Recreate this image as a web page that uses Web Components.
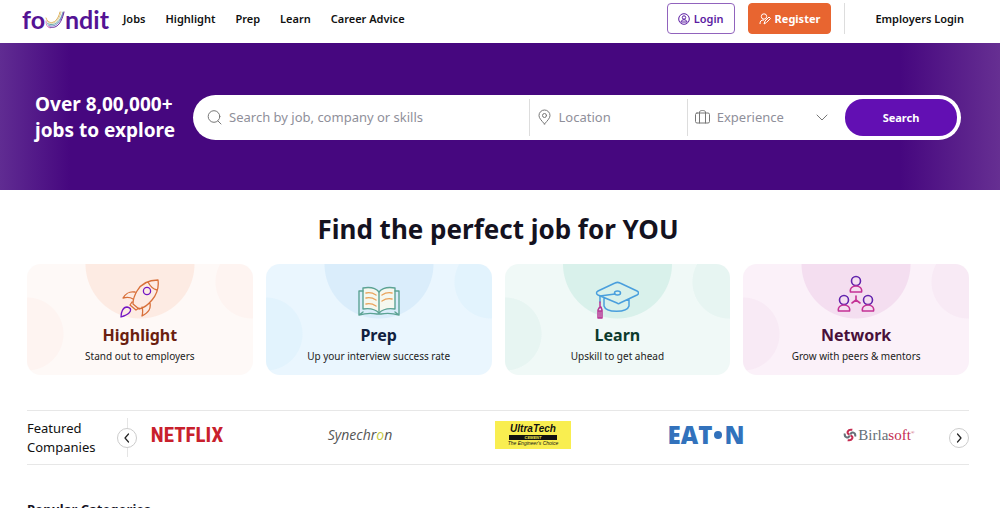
<!DOCTYPE html>
<html lang="en">
<head>
<meta charset="utf-8">
<meta name="viewport" content="width=device-width, initial-scale=1">
<title>foundit</title>
<style>
html { scrollbar-width: none; }
body { margin: 0; background: #fff; color: #111; font-family: "Noto Sans", "Open Sans", sans-serif; font-size: 12px; }
main { padding: 0 31px 0 27px; }
h1 { margin: 20px 0 16px; font-size: 26px; line-height: 38px; font-weight: 700; text-align: center; color: #14121f; }
.cards { display: grid; grid-template-columns: repeat(4, 1fr); gap: 13px; }
</style>
</head>
<body>
<site-header></site-header>
<job-search></job-search>
<main>
  <h1>Find the perfect job for YOU</h1>
  <section class="cards">
    <feature-card style="--bg:#fef9f7;--arc:#fdebe3;--blob:#fef4f1;--ink:#6b1f10">
      <svg slot="icon" width="40" height="45" viewBox="0 -5 40 45" fill="none" stroke="#d8703a" stroke-width="1.3" stroke-linejoin="round" stroke-linecap="round"><path d="M38 1C29 1 21 5 17 12c-3 5-4 9-4 13l6 5c5-1 9-4 13-9C37 15 39 8 38 1ZM28 3c2 4 5 7 9 8M15 13C9 12 6 14 3 19c4-1 7-1 10 1M30 24c1 6-1 9-8 13 1-4 1-6 0-9M12 23l-2 3 6 5 3-2"/><circle cx="27" cy="12" r="3.6" stroke="#7417c4"/><path stroke="#7417c4" d="M1 38c0-5 2-10 6-10 5 1 4 4 2 6-2 2-5 3-8 4Z"/></svg>
      <span slot="title">Highlight</span>Stand out to employers
    </feature-card>
    <feature-card style="--bg:#eaf6fe;--arc:#daedfb;--blob:#e2f3fd;--ink:#10203f">
      <svg slot="icon" width="42" height="46" viewBox="0 -5 42 46" fill="none" stroke="#5ca394" stroke-width="1.4" stroke-linejoin="round" stroke-linecap="round"><path fill="#f5f8ef" d="M21 13C17 8 11 8 5 9v21c6-1 12 0 16 4 4-4 10-5 16-4V9c-6-1-12-1-16 4Z"/><path d="M21 13v21M5 12H1v24c7-2 13-2 18-1h4c5-1 11-1 18 1V12h-4M1 36l4-3M41 36l-4-3"/><path stroke="#e9a45d" d="M8 14c4-1 7 0 10 2M8 19c4-1 7 0 10 2M8 25c4-1 7 0 10 2M34 14c-4-1-7 0-10 2M34 20c-4-1-7 0-10 2"/></svg>
      <span slot="title">Prep</span>Up your interview success rate
    </feature-card>
    <feature-card style="--bg:#f0f9f7;--arc:#d9f1eb;--blob:#e7f5f2;--ink:#0c3a2c">
      <svg slot="icon" width="44" height="46" viewBox="0 -6 44 46" fill="none" stroke="#4a9fdd" stroke-width="1.5" stroke-linejoin="round" stroke-linecap="round"><path d="M20 3 3 11c-2 1-2 3 0 4l19 8c1 1 2 1 3 0l17-8c2-1 2-3 0-4L25 3c-2-1-3-1-5 0ZM9 18v8c2 7 23 7 25 0v-7M5 16l15-2"/><ellipse cx="22.500" cy="13" rx="3" ry="2"/><path d="M5 16v6"/><path stroke="#b73594" d="M5 22v5M4 28l2-1 1 3v8H3v-8l1-2ZM3 31h4M5 32v6"/></svg>
      <span slot="title">Learn</span>Upskill to get ahead
    </feature-card>
    <feature-card style="--bg:#fbf1f9;--arc:#f4def0;--blob:#f8eaf5;--ink:#48103a">
      <svg slot="icon" width="38" height="40" viewBox="0 2 38 40" fill="none" stroke-width="1.6" stroke-linejoin="round" stroke-linecap="round"><g stroke="#6224ad"><circle cx="19" cy="9" r="4.500"/><circle cx="7" cy="28" r="4.500"/><circle cx="31" cy="28" r="4.500"/></g><g stroke="#c43295"><path d="M13.500 20c-2-8 13-8 11 0ZM1.500 39c-2-8 13-8 11 0ZM25.500 39c-2-8 13-8 11 0Z"/><path d="M19 24v4l-4 3M19 28l4 3"/></g></svg>
      <span slot="title">Network</span>Grow with peers &amp; mentors
    </feature-card>
  </section>
  <company-strip></company-strip>
  <popular-categories>Popular Categories</popular-categories>
</main>

<script>
class BaseElement extends HTMLElement {
  constructor() {
    super();
    this.attachShadow({ mode: 'open' }).innerHTML = this.constructor.markup;
  }
}

customElements.define('site-header', class extends BaseElement {
  static markup = `
  <style>
    :host { display: block; }
    header { display: flex; align-items: center; padding: 3px 36px 9px 22px; font-size: 11px; font-weight: 600; line-height: 17px; color: #111; }
    a { color: inherit; text-decoration: none; }
    .logo { display: flex; align-items: center; margin-right: 14px; font-family: Lato, sans-serif; font-size: 25px; line-height: 30px; font-weight: 700; color: #541394; }
    .logo svg { width: 20px; height: 22px; }
    nav { display: flex; gap: 20px; flex: 1; }
    button { display: flex; align-items: center; justify-content: center; gap: 4px; box-sizing: border-box; height: 31px; padding: 0 10px; border-radius: 4px; font: inherit; cursor: pointer; }
    button svg { width: 12px; height: 12px; }
    .login { color: #5b1ba2; background: #fff; border: 1px solid #9163bd; margin-right: 13px; }
    .register { color: #fff; background: #e86530; border: 1px solid #e86530; font-weight: 700; }
    .employers { margin-left: 13px; padding: 7px 0 7px 30px; border-left: 1px solid #ddd; }
  </style>
  <header>
    <a class="logo" href="#" aria-label="foundit home"><span>fo</span><svg viewBox="0 0 20 22" fill="none" stroke-linecap="round" stroke-width="1"><path stroke="#e0b45c" d="M1 10c2 7 11 7 14-6"/><path stroke="#d9c79b" d="M2 13c4 5 12 2 14-9"/><path stroke="#66aaa2" d="M2 15c5 4 13 1 16-11"/><path stroke="#748dce" d="M3 17c5 3 12 0 15-12"/><path stroke="#6a269c" d="M4 19c7 2 12-2 15-15"/><path stroke="#db82ba" d="M1 13c0 4 1 6 4 7"/></svg><span>ndit</span></a>
    <nav><a href="#">Jobs</a><a href="#">Highlight</a><a href="#">Prep</a><a href="#">Learn</a><a href="#">Career Advice</a></nav>
    <button class="login"><svg viewBox="0 0 12 12" fill="none" stroke="currentColor"><circle cx="6" cy="6" r="5.300"/><circle cx="6" cy="4.500" r="1.700"/><path d="M3 9c0-3 6-3 6 0Z"/></svg>Login</button>
    <button class="register"><svg viewBox="0 0 12 12" fill="none" stroke="currentColor" stroke-linejoin="round"><circle cx="5" cy="3.500" r="2.700"/><path d="M1 11c0-3 1-4 4-4M5 11l1-3 4-4 1.500 1.500-4 4L5 11Z"/></svg>Register</button>
    <a class="employers" href="#">Employers Login</a>
  </header>`;
});

customElements.define('job-search', class extends BaseElement {
  static markup = `
  <style>
    :host { display: flex; align-items: center; gap: 18px; padding: 48px 39px 47px 35px; color: #fff;
      background: linear-gradient(90deg, #602c92, #46077f 7%, #46077f 90%, #662f92); }
    h2 { margin: 0; font-size: 19px; line-height: 26px; font-weight: 700; white-space: nowrap; }
    form { flex: 1; min-width: 0; display: grid; grid-template-columns: 335fr 158fr 158fr 112px; box-sizing: border-box; height: 45px; padding: 4px 4px 4px 0; border-radius: 23px; background: #fff; }
    label { display: flex; align-items: center; gap: 7px; min-width: 0; padding: 0 16px 0 8px; color: #8f8f9a; }
    label:first-child { padding-left: 14px; }
    label + label { border-left: 1px solid #ddd; padding-left: 7px; }
    svg { flex: none; width: 15px; height: 16px; fill: none; stroke: #777; stroke-linecap: round; stroke-linejoin: round; }
    input, select { flex: 1; min-width: 0; width: 0; border: 0; padding: 0; outline: 0; background: none; font: inherit; font-size: 13px; line-height: 18px; color: #8f8f9a; appearance: none; }
    input::placeholder { color: #8f8f9a; opacity: 1; }
    button { border: 0; border-radius: 18px; background: #620fb3; color: #fff; font: inherit; font-size: 11px; font-weight: 700; cursor: pointer; }
  </style>
  <h2>Over 8,00,000+<br>jobs to explore</h2>
  <form>
    <label><svg viewBox="0 0 15 16"><circle cx="7" cy="7.500" r="5.800"/><path d="m11 12 3 3"/></svg><input aria-label="Search jobs" placeholder="Search by job, company or skills"></label>
    <label><svg viewBox="0 0 15 16"><path d="M7.500 15C4 11 2 9 2 6.500a5.500 5.500 0 0 1 11 0C13 9 11 11 7.500 15Z"/><circle cx="7.500" cy="6.500" r="2"/></svg><input aria-label="Location" placeholder="Location"></label>
    <label><svg viewBox="0 0 15 16"><rect x=".5" y="4" width="14" height="10" rx="1.500"/><path d="M4.500 14V3c0-2 6-2 6 0v11"/></svg><select aria-label="Experience"><option>Experience</option><option>1 year</option><option>2 years</option></select><svg viewBox="0 0 15 16"><path d="m3 6 5 5 5-5"/></svg></label>
    <button type="button">Search</button>
  </form>`;
});

customElements.define('feature-card', class extends BaseElement {
  static markup = `
  <style>
    :host { display: block; border-radius: 14px; overflow: hidden; text-align: center;
      background: radial-gradient(circle 37px at 0 70px, var(--blob) 36px, transparent 37px),
        radial-gradient(circle 37px at calc(100% - 1px) 18px, var(--blob) 36px, transparent 37px),
        radial-gradient(circle 55px at 50% 0, var(--arc) 54px, transparent 55px), var(--bg); }
    a { display: flex; flex-direction: column; align-items: center; padding: 10px 0 12px; color: #222; text-decoration: none; font-size: 10px; line-height: 14px; }
    .icon { display: flex; height: 50px; align-items: flex-start; }
    .title { margin-bottom: 2px; font-size: 16px; line-height: 23px; font-weight: 700; color: var(--ink); }
  </style>
  <a href="#"><span class="icon"><slot name="icon"></slot></span><span class="title"><slot name="title"></slot></span><span><slot></slot></span></a>`;
});

customElements.define('company-strip', class extends BaseElement {
  static markup = `
  <style>
    :host { display: flex; align-items: center; box-sizing: border-box; height: 55px; margin: 35px 0 34px; border: solid #e7e7e7; border-width: 1px 0; }
    h3 { width: 90px; margin: 0; font-size: 13px; line-height: 19px; font-weight: 400; }
    button { flex: none; display: grid; place-items: center; box-sizing: border-box; width: 20px; height: 20px; padding: 0; border: 1px solid #ccc; border-radius: 50%; background: #fff; }
    button svg { width: 12px; height: 12px; fill: none; stroke: #222; stroke-width: 1.200; stroke-linecap: round; stroke-linejoin: round; }
    .prev { display: grid; align-items: center; height: 39px; background: linear-gradient(#e5e5e5, #e5e5e5) 50% / 1px 100% no-repeat; }
    ul { flex: 1; display: flex; justify-content: space-between; align-items: center; margin: 0; padding: 0 32px 5px 12px; list-style: none; }
    li { width: 76px; height: 28px; display: flex; justify-content: center; align-items: center; white-space: nowrap; }
    .netflix { font: 700 21px/28px "Liberation Sans Narrow", "Roboto Condensed", Roboto, sans-serif; color: #c8202c; }
    .synechron { font: italic 400 14px/20px "Open Sans", sans-serif; color: #555; }
    .synechron span { color: #c5ca43; }
    .ultratech { flex-direction: column; background: #f9ee50; color: #111; }
    .ultratech b { font: italic 700 10px/12px "Liberation Sans", sans-serif; }
    .ultratech i { font: italic 400 5px/7px "Liberation Sans", sans-serif; }
    .ultratech .cement { width: 48px; text-align: center; background: #111; color: #f9ee50; font: italic 700 4px/5px "Liberation Sans", sans-serif; }
    .eaton { font: 800 24px/28px "Open Sans", sans-serif; color: #3272bc; }
    .eaton svg { flex: none; width: 12px; height: 20px; }
    .birlasoft { font: 400 15px/20px "Liberation Serif", serif; color: #667078; }
    .birlasoft svg { flex: none; width: 14px; height: 14px; margin-right: 1px; }
    .birlasoft span { color: #c52c51; }
    sup { font-size: 5px; line-height: 5px; }
  </style>
  <h3>Featured<br>Companies</h3>
  <span class="prev"><button aria-label="Previous companies"><svg viewBox="0 0 12 12"><path d="M7.500 2 4 6l3.500 4"/></svg></button></span>
  <ul>
    <li class="netflix">NETFLIX</li>
    <li class="synechron"><div>Synechr<span>o</span>n</div></li>
    <li class="ultratech"><b>UltraTech</b><span class="cement">CEMENT</span><i>The Engineer's Choice</i></li>
    <li class="eaton">EAT<svg viewBox="0 0 12 20"><circle cx="6" cy="10" r="4" fill="#3272bc"/></svg>N</li>
    <li class="birlasoft"><svg viewBox="0 0 15 15" fill="none" stroke-width="2.200"><path stroke="#c52c51" d="M7 7C3 6 5 1 10 2M8 8c4 1 2 6-3 5"/><path stroke="#667078" d="M7 8c-1 4-6 2-5-2M8 7c1-4 6-2 5 2"/></svg><div>Birla<span>soft<sup>®</sup></span></div></li>
  </ul>
  <button class="next" aria-label="Next companies"><svg viewBox="0 0 12 12"><path d="M4.500 2 8 6l-3.500 4"/></svg></button>`;
});

customElements.define('popular-categories', class extends BaseElement {
  static markup = `
  <style>
    :host { display: block; }
    h2 { margin: 0; font-size: 13px; line-height: 20px; font-weight: 700; color: #14121f; }
  </style>
  <h2><slot></slot></h2>`;
});
</script>
</body>
</html>
